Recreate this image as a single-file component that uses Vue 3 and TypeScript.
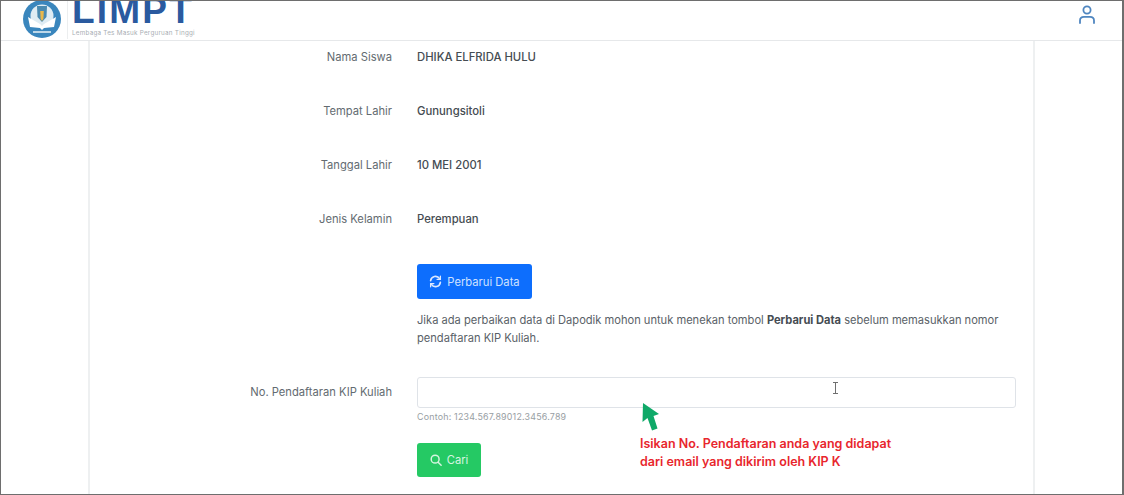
<script setup lang="ts">
const rows: { label: string; value: string }[] = [
  { label: 'Nama Siswa', value: 'DHIKA ELFRIDA HULU' },
  { label: 'Tempat Lahir', value: 'Gunungsitoli' },
  { label: 'Tanggal Lahir', value: '10 MEI 2001' },
  { label: 'Jenis Kelamin', value: 'Perempuan' },
]
</script>

<template>
  <div class="frame">
    <header class="topbar">
      <div class="brand">
        <svg class="emblem" width="38" height="38" viewBox="0 0 38 38">
          <circle cx="19" cy="19" r="19" fill="#3a86bd" />
          <circle cx="19" cy="16" r="11.5" fill="#dfecf3" />
          <path d="M14 6 L24 6 L23.5 17 L19 22 L14.5 17 Z" fill="#4a8ab0" />
          <path d="M17.2 11 L20.8 11 L20.4 19 L19 21 L17.6 19 Z" fill="#e9b84a" />
          <path d="M5 17 L17 24 L19 26 L21 24 L33 17 L31 27 L21 28 L19 30 L17 28 L7 27 Z" fill="#fff" />
          <path d="M10 32 L28 32" stroke="#dfecf3" stroke-width="1.6" />
        </svg>
        <div class="divider"></div>
        <div class="wordmark">
          <span class="limpt">LIMPT</span>
          <span class="tagline">Lembaga Tes Masuk Perguruan Tinggi</span>
        </div>
      </div>
      <svg class="user" width="20" height="20" viewBox="0 0 20 20" fill="none" stroke="#4f86c0" stroke-width="1.8" stroke-linecap="round">
        <circle cx="10" cy="6" r="3.6" />
        <path d="M3 19 V16.5 C3 14 5 12.8 7 12.8 H13 C15 12.8 17 14 17 16.5 V19" />
      </svg>
    </header>

    <main class="sheet">
      <section class="card">
        <div v-for="row in rows" :key="row.label" class="row">
          <div class="label">{{ row.label }}</div>
          <div class="value">{{ row.value }}</div>
        </div>

        <div class="field">
          <div></div>
          <div>
            <button class="btn blue" type="button">
              <svg width="13" height="13" viewBox="0 0 16 16" fill="none" stroke="#dbe8ff" stroke-width="2" stroke-linecap="round">
                <path d="M2 7 A6 6 0 0 1 13 4.5" />
                <path d="M14 9 A6 6 0 0 1 3 11.5" />
                <path d="M14 1.5 V5.5 H10" stroke-width="1.6" />
                <path d="M2 14.5 V10.5 H6" stroke-width="1.6" />
              </svg>
              Perbarui Data
            </button>
            <p class="note">Jika ada perbaikan data di Dapodik mohon untuk menekan tombol <b>Perbarui Data</b> sebelum memasukkan nomor pendaftaran KIP Kuliah.</p>
          </div>
        </div>

        <div class="field kip">
          <div class="label">No. Pendaftaran KIP Kuliah</div>
          <div class="control">
            <div class="input"></div>
            <div class="hint">Contoh: 1234.567.89012.3456.789</div>
            <button class="btn green" type="button">
              <svg width="12" height="12" viewBox="0 0 14 14" fill="none" stroke="#d6f5e0" stroke-width="1.7" stroke-linecap="round">
                <circle cx="6" cy="6" r="4.6" />
                <path d="M9.5 9.5 L13 13" />
              </svg>
              Cari
            </button>

            <svg class="caret" width="7" height="12" viewBox="0 0 7 12" fill="none" stroke="#6f6f6f" stroke-width="1">
              <path d="M1 .5 H6 M3.5 .5 V11.5 M1 11.5 H6" />
            </svg>
            <svg class="arrow" width="18" height="28" viewBox="0 0 18 28">
              <path d="M1 0 L17 11 L11.5 13 L15.5 25.5 L10 27.5 L5.5 15 L0.5 19 Z" fill="#0fa968" />
            </svg>
            <div class="callout">Isikan No. Pendaftaran anda yang didapat<br />dari email yang dikirim oleh KIP K</div>
          </div>
        </div>
      </section>
    </main>
  </div>
</template>

<style scoped>
.frame {
  box-sizing: border-box;
  width: 1124px;
  height: 495px;
  border: 1px solid #6e6e6e;
  border-right-width: 2px;
  background: #fff;
  overflow: hidden;
  font-family: Inter, "Liberation Sans", sans-serif;
  color: #4a5157;
}
.topbar {
  box-sizing: border-box;
  height: 40px;
  border-bottom: 1px solid #e6e8ea;
  display: flex;
  justify-content: space-between;
  align-items: flex-start;
  padding: 0 25px 0 22px;
  overflow: hidden;
}
.brand {
  display: flex;
  align-items: flex-start;
}
.emblem {
  flex: none;
  margin-top: -1px;
}
.divider {
  width: 1px;
  height: 38px;
  background: #eceeef;
  margin: 0 4px 0 6px;
}
.wordmark {
  display: flex;
  flex-direction: column;
  height: 39px;
}
.limpt {
  font-family: "Liberation Sans", Arial, sans-serif;
  font-weight: 700;
  font-size: 37px;
  line-height: 40px;
  letter-spacing: 2.2px;
  color: #2a5a9f;
  margin-top: -10px;
}
.tagline {
  font-size: 6.3px;
  line-height: 10px;
  color: #a8aeb3;
  letter-spacing: 0.25px;
  margin-top: -3px;
  white-space: nowrap;
}
.user {
  margin-top: 3px;
}
.sheet {
  padding: 0 87px 0 87px;
}
.card {
  box-sizing: border-box;
  height: 453px;
  border-left: 2px solid #eef0f1;
  border-right: 2px solid #eef0f1;
  padding-top: 7px;
}
.row,
.field {
  display: grid;
  grid-template-columns: 302px 1fr;
  column-gap: 25px;
}
.row {
  height: 54px;
  font-size: 11.3px;
  line-height: 18px;
}
.label {
  text-align: right;
  font-size: 11.2px;
  line-height: 18px;
  color: #636b71;
}
.value {
  font-weight: 500;
  color: #454c52;
}
.btn {
  display: inline-flex;
  align-items: center;
  justify-content: center;
  gap: 5px;
  border: 0;
  border-radius: 3px;
  padding: 0;
  font: inherit;
  font-size: 11.2px;
}
.blue {
  width: 115px;
  height: 35px;
  background: #0d6efd;
  color: #cfe1ff;
}
.note {
  margin: 12px 0 0;
  width: 592px;
  font-size: 11.12px;
  line-height: 18px;
  color: #596167;
}
.note b {
  color: #454c52;
  font-weight: 700;
}
.kip {
  margin-top: 30px;
}
.kip .label {
  padding-top: 6px;
}
.control {
  position: relative;
  width: 599px;
}
.input {
  box-sizing: border-box;
  height: 31px;
  border: 1px solid #dfe3e8;
  border-radius: 3px;
}
.hint {
  margin-top: 3px;
  font-size: 8.9px;
  line-height: 11px;
  letter-spacing: 0.2px;
  color: #989ea3;
}
.green {
  margin-top: 21px;
  width: 64px;
  height: 34px;
  background: #25c964;
  color: #d6f5e0;
}
.caret {
  position: absolute;
  left: 415px;
  top: 5px;
}
.arrow {
  position: absolute;
  left: 225px;
  top: 26px;
}
.callout {
  position: absolute;
  left: 223px;
  top: 58px;
  width: 300px;
  font-size: 12.5px;
  font-weight: 600;
  line-height: 18px;
  color: #e8262d;
}
</style>
